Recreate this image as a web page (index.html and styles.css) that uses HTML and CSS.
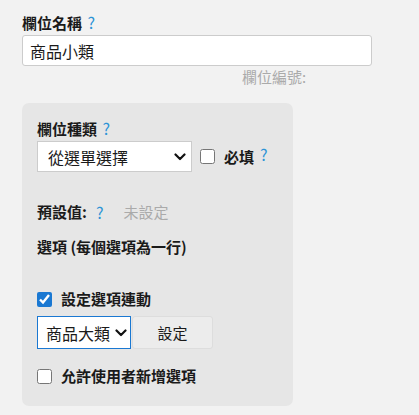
FILE: index.html
```html
<!DOCTYPE html>
<html lang="zh-Hant">
<head>
<meta charset="utf-8">
<link rel="stylesheet" href="styles.css">
</head>
<body>
<div class="page">
  <div class="label">欄位名稱 <span class="help">?</span></div>
  <input class="text-input" type="text" value="商品小類">
  <div class="field-id">欄位編號:</div>

  <div class="panel">
    <div class="label">欄位種類 <span class="help">?</span></div>
    <div class="type-row">
      <span class="select-wrap type-wrap">
        <select class="type-select">
          <option>從選單選擇</option>
        </select>
        <svg class="chev" width="12" height="8" viewBox="0 0 12 8"><path d="M1.5 1.5 L6 6 L10.5 1.5" fill="none" stroke="#111" stroke-width="2.2" stroke-linecap="round" stroke-linejoin="round"/></svg>
      </span>
      <label class="check-label">
        <input type="checkbox" class="check">
        <span class="bold">必填</span>
        <span class="help raised">?</span>
      </label>
    </div>

    <div class="default-row">
      <span class="bold">預設值:</span>
      <span class="help">?</span>
      <span class="muted">未設定</span>
    </div>

    <div class="options-title">選項 (每個選項為一行)</div>

    <label class="check-label link-row">
      <input type="checkbox" class="check" checked>
      <span class="bold">設定選項連動</span>
    </label>

    <div class="link-controls">
      <span class="select-wrap link-wrap">
        <select class="link-select">
          <option>商品大類</option>
        </select>
        <svg class="chev" width="12" height="8" viewBox="0 0 12 8"><path d="M1.5 1.5 L6 6 L10.5 1.5" fill="none" stroke="#111" stroke-width="2.2" stroke-linecap="round" stroke-linejoin="round"/></svg>
      </span>
      <button class="set-btn" type="button">設定</button>
    </div>

    <label class="check-label allow-row">
      <input type="checkbox" class="check">
      <span class="bold">允許使用者新增選項</span>
    </label>
  </div>
</div>
</body>
</html>
```

FILE: styles.css
```css
* { box-sizing: border-box; }

body {
  margin: 0;
  background: #f2f2f2;
  font-family: "Noto Sans CJK TC", "Noto Sans", "Liberation Sans", sans-serif;
  color: #1a1a1a;
  font-size: 15px;
}

.page {
  padding: 12px 0 0 22px;
  width: 372px;
}

.label {
  font-size: 15px;
  font-weight: bold;
  line-height: 20px;
  height: 20px;
}

.help {
  color: #2b93d6;
  font-weight: normal;
  font-size: 16px;
  margin-left: 2px;
}

.help.raised {
  position: relative;
  top: -3px;
  margin-left: 6px;
}

.bold { font-weight: bold; }

.text-input {
  display: block;
  margin-top: 3px;
  width: 350px;
  height: 31px;
  border: 1px solid #cccccc;
  border-radius: 3px;
  background: #fff;
  padding: 0 7px;
  font-family: inherit;
  font-size: 16px;
  color: #1a1a1a;
  outline: none;
}

.field-id {
  margin-top: 1px;
  padding-left: 220px;
  line-height: 20px;
  color: #aaaaaa;
  font-size: 15px;
}

.panel {
  margin-top: 16px;
  width: 271px;
  height: 303px;
  background: #e6e6e6;
  border-radius: 7px;
  padding: 15px 15px 0 15px;
}

.type-row {
  display: flex;
  align-items: center;
  margin-top: 3px;
}

.select-wrap {
  position: relative;
  display: inline-block;
}

.chev {
  position: absolute;
  top: 50%;
  margin-top: -4px;
  pointer-events: none;
}

.type-wrap .chev { right: 6px; }
.link-wrap .chev { right: 4px; }

.type-select,
.link-select {
  appearance: none;
  -webkit-appearance: none;
  border-radius: 0;
  background: #fff;
  font-family: inherit;
  font-size: 16px;
  color: #1a1a1a;
  margin: 0;
  display: block;
}

.type-select {
  width: 155px;
  height: 31px;
  border: 1px solid #cccccc;
  padding: 0 10px;
}

.check-label {
  display: flex;
  align-items: center;
}

.check {
  width: 15px;
  height: 15px;
  margin: 0 9px 0 0;
  accent-color: #1a78d2;
}

.type-row .check-label {
  margin-left: 8px;
}

.default-row {
  margin-top: 30px;
  line-height: 20px;
  display: flex;
  align-items: center;
}

.default-row .help {
  margin-left: 9px;
}

.muted {
  color: #aaaaaa;
  margin-left: 20px;
}

.options-title {
  margin-top: 15px;
  line-height: 20px;
  font-weight: bold;
}

.link-row {
  margin-top: 32px;
  line-height: 20px;
}

.link-controls {
  display: flex;
  margin-top: 7px;
  height: 33px;
}

.link-select {
  width: 94px;
  height: 33px;
  border: 1px solid #1a78d2;
  padding: 0 8px;
}

.set-btn {
  width: 81px;
  height: 33px;
  margin-left: 1px;
  background: #ececec;
  border: 1px solid #dddddd;
  border-radius: 3px;
  font-family: inherit;
  font-size: 15px;
  color: #1a1a1a;
}

.allow-row {
  margin-top: 17px;
  line-height: 20px;
}
```
